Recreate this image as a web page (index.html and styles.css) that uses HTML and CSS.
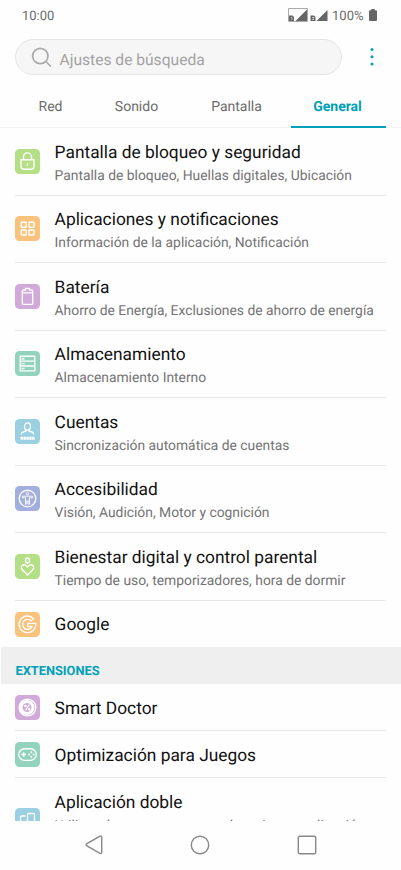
FILE: index.html
```html
<!DOCTYPE html>
<html lang="es">
<head>
<meta charset="utf-8">
<title>Ajustes</title>
<link rel="stylesheet" href="styles.css">
</head>
<body>
<div class="status">
  <span>10:00</span>
  <div class="status-right">
    <svg width="42" height="16" viewBox="0 0 42 16"><path d="M.5.5h19v13H.5z" fill="none" stroke="#aaa"/><path d="M19 1.500V13H7.500zM39.500 2V13H28.500z" fill="#666"/><path d="M1 7.500h3.500L6 9v4H1zM22.500 7.500H26L27.500 9v4h-5z" fill="#666"/><path d="M3 9.500h1v2.500M24 9.500h2l-1.500 2H26" fill="none" stroke="#ddd" stroke-width=".7"/></svg>
    <span class="pct">100%</span>
    <svg width="8" height="13" viewBox="0 0 8 13"><path d="M2.300 0h3.400v1.200H7q1 0 1 1V11q0 1-1 1H1q-1 0-1-1V2.200q0-1 1-1h1.300z" fill="#666"/></svg>
  </div>
</div>
<div class="top">
  <div class="search">
    <svg width="22" height="22" viewBox="0 0 22 22" fill="none" stroke="#aaa" stroke-width="1.700"><circle cx="9.300" cy="9" r="7.700"/><path d="M14.800 14.500l5.200 5"/></svg>
    <span>Ajustes de búsqueda</span>
  </div>
  <svg class="more" width="4" height="20" viewBox="0 0 4 20" fill="#00a0b8"><circle cx="2" cy="2.500" r="1.500"/><circle cx="2" cy="9.800" r="1.500"/><circle cx="2" cy="17" r="1.500"/></svg>
</div>
<nav class="tabs"><span>Red</span><span>Sonido</span><span>Pantalla</span><span class="active">General</span></nav>
<main class="list">
  <section class="row green"><svg class="icon" viewBox="0 0 25 25"><path d="M8.500 10.500V7.800a4 4 0 0 1 8 0v2.700M6 10.700h13v6.500q0 3-3 3H9q-3 0-3-3z"/><path d="M12.500 14.200v2.600"/></svg><div class="text"><h2>Pantalla de bloqueo y seguridad</h2><p>Pantalla de bloqueo, Huellas digitales, Ubicación</p></div></section>
  <section class="row orange"><svg class="icon" viewBox="0 0 25 25"><rect x="6.200" y="6.200" width="5" height="5" rx=".5"/><rect x="14" y="6.200" width="5" height="5" rx=".5"/><rect x="6.200" y="14" width="5" height="5" rx=".5"/><rect x="14" y="14" width="5" height="5" rx=".5"/></svg><div class="text"><h2>Aplicaciones y notificaciones</h2><p>Información de la aplicación, Notificación</p></div></section>
  <section class="row purple"><svg class="icon" viewBox="0 0 25 25"><path d="M10.500 6V4.300h4V6h2q1.200 0 1.200 1.200v12q0 1.200-1.200 1.200h-8q-1.200 0-1.200-1.200v-12Q7.300 6 8.500 6z"/><path d="M7.300 8.800h10.400"/></svg><div class="text"><h2>Batería</h2><p>Ahorro de Energía, Exclusiones de ahorro de energía</p></div></section>
  <section class="row teal"><svg class="icon" viewBox="0 0 25 25"><path d="M5.200 5.200h14.600v14.600H5.200zM5.200 10.100h14.600M5.200 15h14.600M6.500 7.700h3M6.500 12.600h3M6.500 17.500h3"/></svg><div class="text"><h2>Almacenamiento</h2><p>Almacenamiento Interno</p></div></section>
  <section class="row blue"><svg class="icon" viewBox="0 0 25 25"><ellipse cx="12.500" cy="7.500" rx="3" ry="3.700"/><path d="M10.800 10.800v1.400l-3 1q-1.500.5-1.500 2.300M14.200 10.800v1.400l3 1q1.500.5 1.500 2.300"/><path d="M5.500 19.300h14" stroke-width="3" stroke-dasharray="2.500 .4"/></svg><div class="text"><h2>Cuentas</h2><p>Sincronización automática de cuentas</p></div></section>
  <section class="row indigo"><svg class="icon" viewBox="0 0 25 25"><circle cx="12.500" cy="12.500" r="8.300"/><circle cx="12.500" cy="7.700" r="1.300" stroke-width=".9"/><path d="M7.500 10.200h10v1.600h-3v6.400h-1.300v-3.400h-1.400v3.400h-1.300v-6.400h-3z" stroke-width=".9"/></svg><div class="text"><h2>Accesibilidad</h2><p>Visión, Audición, Motor y cognición</p></div></section>
  <section class="row green"><svg class="icon" viewBox="0 0 25 25"><ellipse cx="12.500" cy="6.500" rx="2" ry="2.500"/><path d="M12.500 21l-5-5q-2.500-3 .2-5 2.800-1 4.800 2 2-3 4.800-2 2.700 2 .2 5z"/></svg><div class="text"><h2>Bienestar digital y control parental</h2><p>Tiempo de uso, temporizadores, hora de dormir</p></div></section>
  <section class="row orange short last"><svg class="icon" viewBox="0 0 25 25"><path d="M18.600 6.700A8.300 8.300 0 1 0 20.700 11.300H12.800v3.200h4.300a5 5 0 1 1-.9-5.600z"/></svg><div class="text"><h2>Google</h2></div></section>
  <h3 class="group">EXTENSIONES</h3>
  <section class="row purple short"><svg class="icon" viewBox="0 0 25 25"><circle cx="12.500" cy="12.500" r="8.400"/><circle cx="12" cy="12.500" r="6" stroke-width="3"/><path d="M14.500 9.500l-4 6"/><circle cx="10.500" cy="11" r=".6"/><circle cx="14.200" cy="14.200" r=".6"/></svg><div class="text"><h2>Smart Doctor</h2></div></section>
  <section class="row teal short"><svg class="icon" viewBox="0 0 25 25"><rect x="3.700" y="6.700" width="17.600" height="11.600" rx="5.800"/><path d="M6.300 12.500h4.800M8.700 10.100v4.800" stroke-width="1.400"/><g fill="#fff" stroke="none"><circle cx="16.300" cy="10.300" r="1"/><circle cx="16.300" cy="14.700" r="1"/><circle cx="14.100" cy="12.500" r="1"/><circle cx="18.500" cy="12.500" r="1"/></g></svg><div class="text"><h2>Optimización para Juegos</h2></div></section>
  <section class="row blue tall"><svg class="icon" viewBox="0 0 25 25"><path d="M10.500 8H6.500q-1 0-1 1v9h5M12.500 18V6.500q0-1 1-1h5q1 0 1 1V18z"/></svg><div class="text"><h2>Aplicación doble</h2><p>Utilice dos cuentas para la misma aplicación</p></div></section>
</main>
<footer class="nav">
  <svg width="18" height="20" viewBox="0 0 18 20"><path d="M15 1.200L1.600 8.900q-1 .9 0 1.800L15 18.300q1.700.5 1.700-1V2.200q0-1.500-1.700-1z"/></svg>
  <svg width="20" height="20" viewBox="0 0 20 20"><circle cx="10" cy="10" r="8.700"/></svg>
  <svg width="20" height="20" viewBox="0 0 20 20"><rect x="1.300" y="1.300" width="17.400" height="17.400" rx="1.300"/></svg>
</footer>
</body>
</html>
```
FILE: styles.css
```css
* { box-sizing: border-box; margin: 0; padding: 0; }
body { width: 401px; height: 870px; overflow: hidden; background: #fefefe; font-family: Roboto, sans-serif; color: #111; text-rendering: geometricPrecision; }
svg { display: block; flex: none; }
.status { height: 39px; padding: 8px 24.500px 0 22px; display: flex; justify-content: space-between; font-size: 13px; line-height: 17px; color: #6c6c6c; }
.status-right { display: flex; }
.pct { margin: 0 5px 0 2px; }
.status-right svg:last-child { margin-top: 1px; }
.top { height: 36px; display: flex; align-items: center; padding-left: 15px; }
.search { width: 327px; height: 36px; border: 1px solid #e6e6e6; border-radius: 18px; background: #f6f6f6; display: flex; align-items: center; gap: 6.500px; padding: 5px 0 0 15px; font-size: 15.600px; color: #a2a2a2; }
.search svg { margin-top: -3px; }
.more { margin-left: 27.500px; }
.tabs { height: 53px; padding: 0 15px; display: grid; grid-template-columns: 71px 101px 99px 96px; grid-template-rows: 53px; border-bottom: 1px solid #f3f3f3; font-size: 14px; line-height: 65px; text-align: center; color: #6c6c6c; }
.tabs .active { height: 53px; margin: 0 -4px 0 5px; padding-right: 2px; color: #00a0b8; font-weight: 700; border-bottom: 2px solid #00a0b8; }
.list { height: 693px; overflow: hidden; }
.row { position: relative; height: 67.500px; padding-left: 15px; display: flex; gap: 14.600px; }
.row .text { width: 331px; border-bottom: 1px solid #e8e8e8; }
.row::after { content: ""; position: absolute; left: 15px; bottom: 0; width: 40px; height: 1px; background: #e8e8e8; }
.icon { width: 25px; height: 25px; margin-top: 20.500px; border-radius: 4.500px; fill: none; stroke: #fff; stroke-width: 1.350; }
.text { padding-top: 13.900px; }
h2 { font-size: 17.350px; font-weight: 400; line-height: 22px; white-space: nowrap; }
p { margin-top: 2px; font-size: 13.850px; line-height: 20px; color: #747474; white-space: nowrap; }
.short { height: 47.200px; }
.short .icon { margin-top: 11px; }
.last { height: 46.500px; }
.last .text { border: 0; padding-top: 13px; }
.last::after { display: none; }
.tall .icon { margin-top: 30px; }
.tall p { word-spacing: 6px; }
.green .icon { background: #b4df86; }
.orange .icon { background: #f9c27d; }
.purple .icon { background: #d1a9da; }
.teal .icon { background: #93d3bd; }
.blue .icon { background: #9bcfe2; }
.indigo .icon { background: #a2aedd; }
.group { height: 37px; margin-left: 1px; padding: 16px 0 0 14.500px; background: #efefef; color: #00a0b8; font-size: 12.800px; line-height: 18px; }
.nav { height: 49px; padding: 14px 84px 0 85px; display: flex; justify-content: space-between; }
.nav svg { fill: none; stroke: #888; stroke-width: 1.400; }
```
